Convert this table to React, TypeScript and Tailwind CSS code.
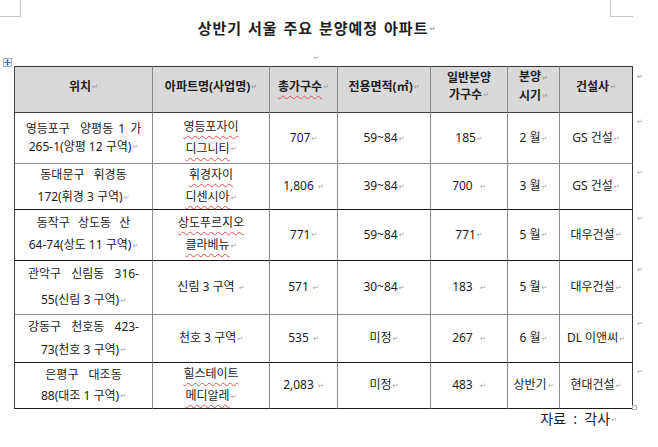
import React from "react"

const Mark = ({ className = "" }: { className?: string }) => (
  <span className={"[font-family:'DejaVu_Sans',sans-serif] text-[7px] text-[#a0a0a0] align-middle ml-px " + className}>↵</span>
)

const Wavy = ({ children }: { children: React.ReactNode }) => (
  <span className="underline decoration-wavy decoration-[#e05050] decoration-1 underline-offset-[4px]">{children}</span>
)

type Row = {
  h: string
  lead: string
  ws: string
  loc: [string, string]
  name: string[]
  wavy: boolean
  total: string
  area: string
  general: string
  when: string
  builder: string
  line: string
}

const rows: Row[] = [
  { h: "h-[51px]", lead: "leading-[18px]", ws: "[word-spacing:2px]", loc: ["영등포구  양평동 1 가", "265-1(양평 12 구역)"], name: ["영등포자이", "디그니티"], wavy: true, total: "707", area: "59~84", general: "185", when: "2 월", builder: "GS 건설", line: "border-b-[#8c8c8c]" },
  { h: "h-[45px]", lead: "leading-[22px]", ws: "[word-spacing:6px]", loc: ["동대문구 휘경동", "172(휘경 3 구역)"], name: ["휘경자이", "디센시아"], wavy: true, total: "1,806 ", area: "39~84", general: "700  ", when: "3 월", builder: "GS 건설", line: "border-b-[#1a1a1a]" },
  { h: "h-[51px]", lead: "leading-[22px]", ws: "[word-spacing:5px]", loc: ["동작구 상도동 산", "64-74(상도 11 구역)"], name: ["상도푸르지오", "클라베뉴"], wavy: true, total: "771", area: "59~84", general: "771", when: "5 월", builder: "대우건설", line: "border-b-[#1a1a1a]" },
  { h: "h-[53px]", lead: "leading-[26px]", ws: "[word-spacing:7px]", loc: ["관악구 신림동 316-", "55(신림 3 구역)"], name: ["신림 3 구역 "], wavy: false, total: "571 ", area: "30~84", general: "183  ", when: "5 월", builder: "대우건설", line: "border-b-[#8c8c8c]" },
  { h: "h-[47px]", lead: "leading-[23px]", ws: "[word-spacing:7px]", loc: ["강동구 천호동 423-", "73(천호 3 구역)"], name: ["천호 3 구역"], wavy: false, total: "535 ", area: "미정", general: "267  ", when: "6 월", builder: "DL 이앤씨", line: "border-b-[#1a1a1a]" },
  { h: "h-[45px]", lead: "leading-[21px]", ws: "[word-spacing:7px]", loc: ["은평구 대조동", "88(대조 1 구역)"], name: ["힐스테이트", "메디알레"], wavy: true, total: "2,083 ", area: "미정", general: "483  ", when: "상반기", builder: "현대건설", line: "border-b-[#1a1a1a]" },
]

const cell = "border-r border-r-[#8c8c8c] border-b text-center align-middle p-0 whitespace-pre"

export default function App() {
  return (
    <div className="relative w-[658px] h-[447px] bg-white overflow-hidden text-[#1c1c1c] [font-family:'Noto_Sans','Noto_Sans_CJK_KR',sans-serif]">
      {/* page corner marks */}
      <div className="absolute left-0 top-0 w-[21px] h-[17px] border-r border-b border-[#c4c4c4]" />
      <div className="absolute left-[610px] top-0 w-[23px] h-[17px] border-l border-b border-[#c4c4c4]" />

      {/* title */}
      <div className="pt-[19px] h-[38px] text-center text-[15px] font-bold leading-[19px] tracking-[1px] [word-spacing:1px] pr-[24px]">
        상반기 서울 주요 분양예정 아파트<Mark />
      </div>
      <div className="h-[28px] flex justify-center items-start pt-[15px] pr-[26px]">
        <Mark className="ml-0" />
      </div>

      {/* table */}
      <div className="relative ml-[14px] w-[640px]">
        <div className="absolute left-[-11px] top-[-8px] w-[9px] h-[9px] border border-[#9db3d9] bg-[#eef3fb] flex items-center justify-center">
          <svg width="7" height="7" viewBox="0 0 7 7">
            <path d="M3.5 0.5v6M0.5 3.5h6" stroke="#3d63b0" strokeWidth="1" />
            <path d="M2.5 1.5l1-1 1 1M2.5 5.5l1 1 1-1" stroke="#3d63b0" strokeWidth="0.8" fill="none" />
          </svg>
        </div>
        <div className="absolute left-[618px] top-[339px] w-[5px] h-[5px] border border-[#b0b0b0]" />
        <table className="table-fixed border-separate border-spacing-0 text-[12px]">
          <colgroup>
            <col className="w-[139px]" />
            <col className="w-[117px]" />
            <col className="w-[68px]" />
            <col className="w-[93px]" />
            <col className="w-[77px]" />
            <col className="w-[52px]" />
            <col className="w-[73px]" />
            <col className="w-[20px]" />
          </colgroup>
          <thead>
            <tr className="h-[47px] font-bold">
              <td className={cell + " border-t border-t-[#333] border-l border-l-[#444] bg-[#d9d9d9] border-b-[#444] pb-[6px]"}>위치<Mark /></td>
              <td className={cell + " border-t border-t-[#333] bg-[#d9d9d9] border-b-[#444] pb-[6px]"}>아파트명(사업명)<Mark /></td>
              <td className={cell + " border-t border-t-[#333] bg-[#d9d9d9] border-b-[#444] pb-[6px]"}><Wavy>총가구수</Wavy><Mark /></td>
              <td className={cell + " border-t border-t-[#333] bg-[#d9d9d9] border-b-[#444] pb-[6px]"}>전용면적(㎡)<Mark /></td>
              <td className={cell + " border-t border-t-[#333] bg-[#d9d9d9] border-b-[#444] pb-[6px] leading-[17px]"}>일반분양<br />가구수<Mark /></td>
              <td className={cell + " border-t border-t-[#333] bg-[#d9d9d9] border-b-[#444] pb-[6px] leading-[17px]"}>분양<Mark /><br />시기<Mark /></td>
              <td className={cell + " border-t border-t-[#333] border-r-[#333] bg-[#d9d9d9] border-b-[#444] pb-[6px]"}>건설사<Mark /></td>
              <td className="align-top pt-[8px] pl-[3px] leading-none"><Mark className="ml-0 align-top" /></td>
            </tr>
          </thead>
          <tbody>
            {rows.map((r, i) => (
              <tr key={i} className={r.h}>
                <td className={cell + " border-l border-l-[#444] " + r.line + " " + r.lead}>
                  <div className={r.ws}>{r.loc[0]}</div>
                  <div>{r.loc[1]}<Mark /></div>
                </td>
                <td className={cell + " " + r.line + " leading-[22px]"}>
                  {r.name.map((n, j) => (
                    <div key={j}>
                      {r.wavy ? <Wavy>{n}</Wavy> : n}
                      {j === r.name.length - 1 && <Mark />}
                    </div>
                  ))}
                </td>
                <td className={cell + " " + r.line}>{r.total}<Mark /></td>
                <td className={cell + " " + r.line}>{r.area}<Mark /></td>
                <td className={cell + " " + r.line}>{r.general}<Mark /></td>
                <td className={cell + " " + r.line}>{r.when}<Mark /></td>
                <td className={cell + " border-r-[#333] " + r.line}>{r.builder}<Mark /></td>
                <td className="align-top pt-[6px] pl-[3px] leading-none"><Mark className="ml-0 align-top" /></td>
              </tr>
            ))}
          </tbody>
        </table>
      </div>

      {/* source */}
      <div className="w-[617px] text-right text-[14px] leading-[20px] whitespace-pre">
        자료  :  각사<Mark />
      </div>
    </div>
  )
}
